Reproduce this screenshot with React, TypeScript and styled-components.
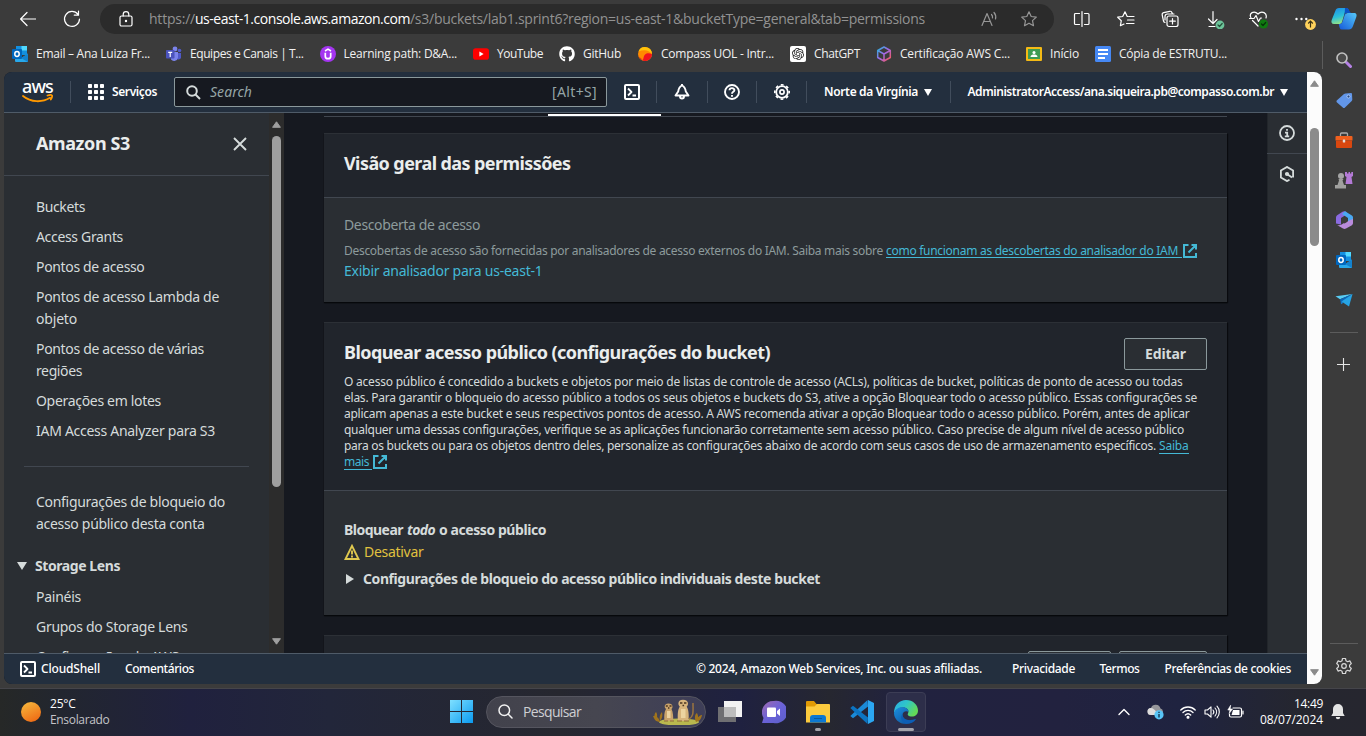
import React, { useLayoutEffect, useRef } from "react";
import styled, { createGlobalStyle, css } from "styled-components";
import { FaGithub } from "react-icons/fa";
import { SiOpenai } from "react-icons/si";

const ember = `"Noto Sans", "Open Sans", sans-serif`;
const segoe = `"Open Sans", "Noto Sans", sans-serif`;

const GlobalStyle = createGlobalStyle`
  * { box-sizing: border-box; }
  html, body { margin: 0; height: 736px; overflow: hidden; background: #3b3b3b; }
  body { font-family: ${ember}; font-size: 14px; line-height: 22px; color: #d5dbdb; }
  svg { display: block; flex: none; }
`;

/* ---------- text that keeps a given width by adjusting its tracking ---------- */

const FitBox = styled.span<{ $w: number }>`
  display: inline-block;
  flex: none;
  width: ${(p) => p.$w}px;
  white-space: pre;
  vertical-align: top;
`;

function Fit({ w, children, className }: { w: number; children: string; className?: string }) {
  const ref = useRef<HTMLSpanElement>(null);
  useLayoutEffect(() => {
    const el = ref.current;
    if (!el) return;
    el.style.letterSpacing = "0px";
    const natural = el.getBoundingClientRect().width;
    el.style.letterSpacing = `${(w - natural) / children.length}px`;
  }, [w, children]);
  return (
    <FitBox $w={w} className={className}>
      <span ref={ref}>{children}</span>
    </FitBox>
  );
}

/* ---------- layout shells ---------- */

const Screen = styled.div`
  display: flex;
  flex-direction: column;
  width: 1366px;
  height: 736px;
  overflow: hidden;
  background: #3b3b3b;
`;

const Toolbar = styled.div`
  display: flex;
  align-items: center;
  height: 38px;
  flex: none;
`;

const ToolIcon = styled.span<{ $ml?: number }>`
  display: block;
  flex: none;
  margin-left: ${(p) => p.$ml ?? 0}px;
`;

const AddressBar = styled.div`
  display: flex;
  align-items: center;
  width: 954px;
  height: 30px;
  margin-left: 19px;
  padding-left: 18px;
  border-radius: 15px;
  background: #2b2b2b;
  color: #8f8f8f;
  font: 14px/30px ${segoe};
`;

const UrlPart = styled(Fit)<{ $strong?: boolean }>`
  color: ${(p) => (p.$strong ? "#ffffff" : "#929292")};
`;

const Middle = styled.div`
  display: flex;
  height: 650px;
  flex: none;
`;

const BrowserColumn = styled.div`
  width: 1322px;
  flex: none;
`;

const Bookmarks = styled.div`
  display: flex;
  align-items: center;
  gap: 16px;
  height: 34px;
  padding: 0 0 2px 12px;
  color: #f1f1f1;
  font: 12px/18px ${segoe};
`;

const Bookmark = styled.div`
  display: flex;
  align-items: center;
  gap: 8px;
`;

const Page = styled.div`
  display: flex;
  width: 1318px;
  height: 612px;
  margin-left: 4px;
  border-radius: 8px;
  overflow: hidden;
  background: #161920;
`;

const Console = styled.div`
  display: flex;
  flex-direction: column;
  width: 1303px;
  flex: none;
`;

/* ---------- AWS header ---------- */

const AwsHeader = styled.header`
  display: flex;
  align-items: center;
  height: 41px;
  flex: none;
  padding-left: 18px;
  background: #232f3e;
  border-bottom: 1px solid #4f5b68;
  color: #ffffff;
  font-size: 12px;
  font-weight: 600;
`;

const LogoBox = styled.div`
  width: 31px;
  height: 24px;
  display: flex;
  flex-direction: column;
  font: 500 18px/12px ${ember};
  color: #ffffff;
`;

const Smile = styled.svg`
  margin-top: 2px;
`;

const Divider = styled.span<{ $ml: number; $mr: number }>`
  flex: none;
  width: 1px;
  height: 22px;
  margin: 0 ${(p) => p.$mr}px 0 ${(p) => p.$ml}px;
  background: #414d5c;
`;

const SearchField = styled.div`
  display: flex;
  align-items: center;
  width: 433px;
  height: 30px;
  margin: 0 17px;
  padding: 0 9px 0 11px;
  border: 1px solid #8b999c;
  border-radius: 2px;
  background: #161920;
  color: #95a5a6;
  font-size: 14px;
  font-weight: 400;
`;

const SearchHint = styled(Fit)`
  margin-left: 9px;
  font-style: italic;
`;

const Shortcut = styled(Fit)`
  margin-left: auto;
`;

const Spaced = styled.span<{ $ml: number }>`
  display: flex;
  align-items: center;
  flex: none;
  margin-left: ${(p) => p.$ml}px;
`;

/* ---------- console body ---------- */

const ConsoleBody = styled.div`
  display: flex;
  height: 540px;
  flex: none;
  overflow: hidden;
`;

const SideNav = styled.nav`
  width: 265px;
  height: 540px;
  flex: none;
  overflow: hidden;
  background: #2a2e33;
`;

const SideTitle = styled.div`
  display: flex;
  align-items: center;
  justify-content: space-between;
  height: 63px;
  padding: 0 22px 0 32px;
  border-bottom: 1px solid #414750;
  color: #eaeded;
  font-size: 18px;
  font-weight: 700;
  line-height: 22px;
`;

const SideTitleText = styled(Fit)`
  margin-bottom: 2px;
`;

const NavGroup = styled.div<{ $top: number }>`
  display: flex;
  flex-direction: column;
  gap: 8px;
  padding: ${(p) => p.$top}px 0 0 32px;
`;

const NavLink = styled.div`
  display: flex;
  flex-direction: column;
`;

const NavRule = styled.div`
  width: 225px;
  height: 1px;
  margin: 24px 0 0 20px;
  background: #414750;
`;

const NavHeading = styled.div`
  display: flex;
  align-items: center;
  gap: 8px;
  margin: 20px 0 1px;
  padding-left: 13px;
  font-weight: 700;
`;

const Scrollbar = styled.div<{ $light?: boolean }>`
  display: flex;
  flex-direction: column;
  align-items: center;
  width: 15px;
  flex: none;
  ${(p) =>
    p.$light
      ? css`
          padding: 8px 0 8px;
          background: #fcfcfc;
          color: #8b8b8b;
        `
      : css`
          padding: 8px 0 8px;
          background: #2c2c2c;
          color: #9f9f9f;
        `}
`;

const Thumb = styled.div<{ $h: number; $mt: number }>`
  width: 9px;
  height: ${(p) => p.$h}px;
  margin-top: ${(p) => p.$mt}px;
  border-radius: 5px;
  background: currentColor;
`;

const ArrowEnd = styled.div`
  margin-top: auto;
`;

const Main = styled.main`
  width: 983px;
  height: 540px;
  padding: 0 40px;
  overflow: hidden;
  background: #161920;
`;

const TabLine = styled.div`
  height: 4px;
  padding: 1px 0 0 224px;
  border-bottom: 1px solid #414750;
`;

const ActiveTab = styled.div`
  width: 113px;
  height: 2px;
  background: #ffffff;
`;

const Card = styled.section<{ $mt: number; $h: number }>`
  height: ${(p) => p.$h}px;
  margin-top: ${(p) => p.$mt}px;
  background: #2a2e33;
  box-shadow: 0 1px 1px #06080b, 1px 1px 1px #0a0c10;
`;

const CardHead = styled.div<{ $h: number }>`
  height: ${(p) => p.$h}px;
  padding: 0 20px;
  background: #21252c;
  border-top: 1px solid #2c3036;
  border-bottom: 1px solid #414750;
`;

const CardTitle = styled.h2<{ $pt: number }>`
  margin: 0;
  padding-top: ${(p) => p.$pt}px;
  color: #eaeded;
  font-size: 18px;
  font-weight: 700;
  line-height: 22px;
`;

const TitleRow = styled.div`
  display: flex;
  justify-content: space-between;
  padding-top: 15px;
`;

const EditButton = styled.button`
  width: 83px;
  height: 32px;
  padding: 0;
  border: 1px solid #8b999c;
  border-radius: 2px;
  background: #2a2e33;
  color: #d5dbdb;
  font: 700 14px/28px ${ember};
`;

const Description = styled.div`
  display: flex;
  flex-direction: column;
  padding-top: 4px;
  color: #d5dbdb;
  font-size: 12px;
  line-height: 16px;
`;

const TextLine = styled.div`
  display: flex;
  height: 16px;
`;

const CardBody = styled.div<{ $pt: number }>`
  padding: ${(p) => p.$pt}px 20px 0;
`;

const Muted = styled.div`
  color: #8d9b9c;
`;

const Caption = styled.div`
  display: flex;
  height: 22px;
  padding-top: 2px;
  margin-top: 2px;
  color: #8d9b9c;
  font-size: 12px;
  line-height: 22px;
`;

const LinkText = styled.div`
  color: #44b9d6;
`;

const Underlined = styled.span<{ $ml?: number; $w: number; $h?: number }>`
  display: block;
  flex: none;
  width: ${(p) => p.$w}px;
  height: ${(p) => p.$h ?? 16}px;
  margin-left: ${(p) => p.$ml ?? 0}px;
  border-bottom: 1px solid #44b9d6;
  color: #44b9d6;
`;

const LinkIcon = styled.span`
  display: block;
  flex: none;
  height: 14px;
  margin-top: 1px;
`;

const StrongRow = styled.div<{ $mt?: number }>`
  display: flex;
  align-items: center;
  gap: 4px;
  margin-top: ${(p) => p.$mt ?? 0}px;
  color: #d5dbdb;
  font-weight: 700;
`;

const Emphasis = styled(Fit)`
  font-style: italic;
`;

const Warning = styled.div`
  display: flex;
  align-items: center;
  gap: 4px;
  color: #e0c13f;
`;

const Expander = styled(StrongRow)`
  gap: 9px;
  padding-left: 2px;
`;

const GhostButtons = styled.div`
  display: flex;
  gap: 8px;
  justify-content: flex-end;
  padding-top: 15px;
`;

const GhostButton = styled.div<{ $w: number }>`
  width: ${(p) => p.$w}px;
  height: 32px;
  border: 1px solid #8b999c;
  border-radius: 2px;
  background: #2a2e33;
`;

const HelpRail = styled.aside`
  width: 40px;
  height: 540px;
  flex: none;
  box-shadow: inset 1px 0 0 #22262b;
  background: #2a2e33;
  color: #d5dbdb;
`;

const RailItem = styled.div<{ $line?: boolean }>`
  display: flex;
  align-items: center;
  justify-content: center;
  height: 41px;
  border-bottom: 1px solid ${(p) => (p.$line ? "#414750" : "transparent")};
`;

const Footer = styled.footer`
  display: flex;
  align-items: center;
  height: 31px;
  flex: none;
  padding-left: 16px;
  background: #232f3e;
  border-top: 1px solid #4f5b68;
  color: #ffffff;
  font-size: 12px;
  font-weight: 500;
`;

/* ---------- Edge side bar ---------- */

const EdgeBar = styled.div`
  display: flex;
  flex-direction: column;
  align-items: center;
  width: 44px;
  height: 650px;
  padding: 2px 0 2px;
`;

const EdgeItem = styled.div<{ $mr?: number }>`
  display: flex;
  align-items: center;
  justify-content: center;
  height: 40px;
  margin-right: ${(p) => p.$mr ?? 0}px;
`;

const EdgeRule = styled.div<{ $auto?: boolean }>`
  width: 28px;
  height: 1px;
  margin: ${(p) => (p.$auto ? "auto 0 2px" : "12px 0 11px")};
  background: #5c5c5c;
`;

const ChromeDivider = styled.div`
  width: 1px;
  height: 28px;
  margin: 2px -1px 0 auto;
  background: #5c5c5c;
`;

/* ---------- taskbar ---------- */

const Taskbar = styled.div`
  display: flex;
  align-items: center;
  height: 48px;
  flex: none;
  padding-bottom: 2px;
  border-top: 1px solid #45454a;
  background: linear-gradient(90deg, #262827 0, #22262f 60px, #20213e 190px, #22263a 330px, #26272f 560px, #1f2140 740px, #262730 830px, #21223f 900px, #22223f 1060px, #1f2340 1180px, #25262f 1300px, #26262f 1366px);
  color: #ffffff;
  font: 12px/16px ${segoe};
`;

const Weather = styled.div`
  display: flex;
  flex-direction: column;
  margin-left: 9px;
  width: 60px;
`;

const Faded = styled.div`
  color: #c4c4c8;
`;

const TaskSearch = styled.div`
  display: flex;
  align-items: center;
  width: 220px;
  height: 32px;
  margin-left: 13px;
  padding: 0 3px 0 11px;
  border: 1px solid #55555f;
  border-radius: 16px;
  background: linear-gradient(90deg, #42424c, #464650 50%, #3e3e58);
  color: #cfcfd3;
  font-size: 14px;
`;

const TaskIcon = styled.div<{ $active?: boolean; $mark?: "dot" | "bar" }>`
  display: flex;
  flex-direction: column;
  align-items: center;
  width: 40px;
  height: 40px;
  margin: 0 2px;
  padding-top: 7px;
  border: 1px solid ${(p) => (p.$active ? "#3c3d55" : "transparent")};
  border-radius: 4px;
  background: ${(p) => (p.$active ? "#2d2e49" : "transparent")};
  &::after {
    content: "";
    margin-top: 4px;
    width: ${(p) => (p.$mark === "bar" ? 16 : p.$mark === "dot" ? 6 : 0)}px;
    height: 3px;
    flex: none;
    border-radius: 2px;
    background: #a3a3ab;
  }
`;

const Clock = styled.div`
  display: flex;
  flex-direction: column;
  align-items: flex-end;
  width: 63px;
  margin-left: 16px;
`;

/* ---------- icons ---------- */

const line = { fill: "none", stroke: "currentColor", strokeLinecap: "round", strokeLinejoin: "round" } as const;

const Caret = ({ dir, w = 10, h = 8 }: { dir: "up" | "down" | "right"; w?: number; h?: number }) => (
  <svg width={w} height={h} viewBox="0 0 10 8" preserveAspectRatio="none" fill="currentColor">
    <path d={dir === "up" ? "M5 0L10 8H0z" : dir === "down" ? "M0 0h10L5 8z" : "M0 0l10 4-10 4z"} />
  </svg>
);

const ScrollArrow = ({ up }: { up?: boolean }) => (
  <svg width="9" height="7" viewBox="0 0 9 7" fill="currentColor" stroke="currentColor" strokeLinejoin="round">
    <path d={up ? "M4.500 .8L8.400 6.300H.6z" : "M4.500 6.200L.6.7h7.800z"} />
  </svg>
);

const External = () => (
  <svg width="15" height="14" viewBox="0 0 15 14" fill="none" stroke="#44b9d6" strokeWidth="2">
    <path d="M5.500 1H1v12h12V9M8.500 1H13v4.500M13 1L5.500 8.500" />
  </svg>
);

const ShellIcon = () => (
  <svg width="16" height="16" viewBox="0 0 16 16" fill="none" stroke="#fff" strokeWidth="2" strokeLinejoin="round">
    <rect x="1" y="1" width="14" height="14" rx="1" />
    <path d="M4 4.500L7.500 8 4 11.500M8.500 11.500H12" strokeWidth="1.800" />
  </svg>
);

const Outlook = ({ s = 16 }: { s?: number }) => (
  <svg width={s} height={s} viewBox="0 0 16 16">
    <path d="M4 0h11v9H4z" fill="#1490df" />
    <path d="M9.500 0H15v4.500H9.500z" fill="#50d9ff" />
    <path d="M4 4.500h5.500V9H4z" fill="#0364b8" />
    <path d="M3 8l6.500 4L16 7.500V15a1 1 0 0 1-1 1H4a1 1 0 0 1-1-1z" fill="#28a8ea" />
    <path d="M16 7.500V16L9 12z" fill="#1382ce" />
    <rect x="0" y="3" width="10" height="10" rx="1" fill="#0067be" />
    <ellipse cx="5" cy="8" rx="2.200" ry="2.400" fill="none" stroke="#fff" strokeWidth="1.500" />
  </svg>
);

const Meerkats = () => (
  <svg width="50" height="26" viewBox="0 0 50 26">
    <ellipse cx="26" cy="23" rx="20" ry="3.500" fill="#b9b84e" />
    <path d="M3 21c-3-4-1-7 0-8 2 3 1 6 0 8zM7 23c-5 0-6-4-7-6 4 0 6 2 7 6zM7 22c-1-4 0-7 2-9 1 4 0 7-2 9zM43 23c-2-4-1-8 1-9 2 4 1 7-1 9zM43 23c1-5 4-7 6-7-1 4-2 6-6 7z" fill="#a0741d" />
    <path d="M15.500 4.500c-2.600 0-4 1.600-3.800 3.300.1 1 .8 1.700 1.300 2.200-2 3-2 8-1.500 12h8.500c.5-4 0-9-1.500-12 .7-.6 1-1.400 1-2.300 0-2-1.600-3.200-4-3.200z" fill="#c9a36b" />
    <path d="M30 .8c-3 0-4.600 1.700-4.600 3.700 0 1.300.6 2.300 1.400 3C24.500 11 24.500 17 25 22h10.500c.6-5 .3-11-1.800-14.500.8-.7 1.300-1.700 1.300-3 0-2.200-2-3.700-5-3.700z" fill="#d7b47c" />
    <path d="M36 20c5-3 4-7 4-16" fill="none" stroke="#9b7440" strokeWidth="1.500" />
    <path d="M14 12h3.500v7H14zM28 10h4.500v9H28z" fill="#ecd3a0" />
    <path d="M12.800 7h2M16.500 7h2M27 4h2.400M31 4h2.400M15 9h1.400M29.500 6.500h1.600" stroke="#4b3420" strokeWidth="1.400" />
    <path d="M11 22h4M17 22h4M24 22h5M31 22h5" stroke="#8f6a37" strokeWidth="1" />
  </svg>
);

/* ---------- data ---------- */

const bookmarks: { label: string; w: number; icon: React.ReactNode }[] = [
  { label: "Email – Ana Luiza Fr...", w: 114, icon: <Outlook /> },
  {
    label: "Equipes e Canais | T...",
    w: 113.500,
    icon: (
      <svg width="16" height="16" viewBox="0 0 16 16">
        <circle cx="13.500" cy="4.500" r="1.800" fill="#5059c9" />
        <circle cx="9" cy="3" r="2.400" fill="#7b83eb" />
        <path d="M11 7h4v4.500a2.500 2.500 0 0 1-4 1.500z" fill="#5059c9" />
        <path d="M5 6h7v5.500a4 4 0 0 1-7 2z" fill="#7b83eb" />
        <rect x="0" y="4" width="8.500" height="8.500" rx=".8" fill="#4b53bc" />
        <path d="M2.200 6.300h4M4.200 6.300V11" stroke="#fff" strokeWidth="1.200" />
      </svg>
    ),
  },
  {
    label: "Learning path: D&A...",
    w: 113.500,
    icon: (
      <svg width="16" height="16" viewBox="0 0 16 16" fill="none" stroke="#fff">
        <circle cx="8" cy="8" r="8" fill="#a435f0" stroke="none" />
        <path d="M5.300 6.800v3.400a2.700 2.500 0 0 0 5.400 0V6.800" strokeWidth="1.700" />
        <path d="M5 5l3-1.800L11 5" strokeWidth="1.500" />
      </svg>
    ),
  },
  {
    label: "YouTube",
    w: 46,
    icon: (
      <svg width="16" height="16" viewBox="0 0 16 16">
        <rect x="0" y="2.300" width="16" height="11.400" rx="2.800" fill="#f00" />
        <path d="M6.400 5.500L10.600 8l-4.200 2.500z" fill="#fff" />
      </svg>
    ),
  },
  { label: "GitHub", w: 38, icon: <FaGithub size={16} color="#ffffff" /> },
  {
    label: "Compass UOL - Intr...",
    w: 113,
    icon: (
      <svg width="16" height="16" viewBox="0 0 16 16">
        <circle cx="8" cy="8" r="7" fill="#ff8a00" />
        <path d="M1.500 5.500A7 7 0 0 1 15 8c-3-4-8-5-13.500-2.500z" fill="#ffc20a" />
        <path d="M5.500 14.500C7 13 6 9 9.500 7.500c2-.7 4-.2 5.500.8a7 7 0 0 1-9.500 6.200z" fill="#f0141e" />
        <path d="M1.500 10.500c1.500 1 3.500 2 4.500 4a7 7 0 0 1-4.500-4z" fill="#e8321c" />
      </svg>
    ),
  },
  {
    label: "ChatGPT",
    w: 46,
    icon: (
      <svg width="16" height="16" viewBox="0 0 16 16">
        <rect width="16" height="16" rx="2" fill="#fff" />
        <SiOpenai x="2" y="2" size={12} color="#222222" />
      </svg>
    ),
  },
  {
    label: "Certificação AWS C...",
    w: 110,
    icon: (
      <svg width="16" height="16" viewBox="0 0 16 16" fill="none" strokeWidth="1.500" strokeLinejoin="round">
        <defs>
          <linearGradient id="cube" x1="0" y1="0" x2="1" y2="1">
            <stop offset="0" stopColor="#1fb6d9" />
            <stop offset=".5" stopColor="#a266e8" />
            <stop offset="1" stopColor="#ff5a4e" />
          </linearGradient>
        </defs>
        <path d="M8 1l6.300 3.500v7L8 15l-6.300-3.500v-7zM1.700 4.500L8 8l6.300-3.500M8 8v7" stroke="url(#cube)" />
      </svg>
    ),
  },
  {
    label: "Início",
    w: 29,
    icon: (
      <svg width="16" height="16" viewBox="0 0 16 16">
        <rect y="1" width="16" height="14" rx="1" fill="#f5ba15" />
        <rect x="2" y="3" width="12" height="10" fill="#3f9b52" />
        <circle cx="8" cy="6.500" r="1.500" fill="#fff" />
        <path d="M4.500 11c0-2 2-2.500 3.500-2.500s3.500.5 3.500 2.500z" fill="#fff" />
      </svg>
    ),
  },
  {
    label: "Cópia de ESTRUTU...",
    w: 108,
    icon: (
      <svg width="16" height="16" viewBox="0 0 16 16">
        <rect width="16" height="16" rx="1.500" fill="#4688f4" />
        <path d="M3 4h10M3 8h10M3 12h7" stroke="#fff" strokeWidth="2" />
      </svg>
    ),
  },
];

type NavLine = [string, number];
const navItems: NavLine[][] = [
  [["Buckets", 49]],
  [["Access Grants", 87]],
  [["Pontos de acesso", 108.5]],
  [["Pontos de acesso Lambda de", 183], ["objeto", 41]],
  [["Pontos de acesso de várias", 168], ["regiões", 46]],
  [["Operações em lotes", 125]],
  [["IAM Access Analyzer para S3", 179]],
];
const accountItems: NavLine[][] = [[["Configurações de bloqueio do", 189], ["acesso público desta conta", 168.5]]];
const lensItems: NavLine[][] = [[["Painéis", 45]], [["Grupos do Storage Lens", 151.5]], [["Configurações do AWS", 143]]];

const paragraph: NavLine[] = [
  ["O acesso público é concedido a buckets e objetos por meio de listas de controle de acesso (ACLs), políticas de bucket, políticas de ponto de acesso ou todas", 838.5],
  ["elas. Para garantir o bloqueio do acesso público a todos os seus objetos e buckets do S3, ative a opção Bloquear todo o acesso público. Essas configurações se", 853],
  ["aplicam apenas a este bucket e seus respectivos pontos de acesso. A AWS recomenda ativar a opção Bloquear todo o acesso público. Porém, antes de aplicar", 845.5],
  ["qualquer uma dessas configurações, verifique se as aplicações funcionarão corretamente sem acesso público. Caso precise de algum nível de acesso público", 840],
];

function NavList({ items, top }: { items: NavLine[][]; top: number }) {
  return (
    <NavGroup $top={top}>
      {items.map((lines) => (
        <NavLink key={lines[0][0]}>
          {lines.map(([text, w]) => (
            <Fit key={text} w={w}>{text}</Fit>
          ))}
        </NavLink>
      ))}
    </NavGroup>
  );
}

/* ---------- sections ---------- */

function BrowserToolbar() {
  return (
    <Toolbar>
      <ToolIcon $ml={20}>
        <svg width="16" height="16" viewBox="0 0 16 16" {...line} color="#fff" strokeWidth="1.200"><path d="M15.500 8H.8M7 1.500L.6 8 7 14.500" /></svg>
      </ToolIcon>
      <ToolIcon $ml={27}>
        <svg width="18" height="18" viewBox="0 0 18 18" {...line} color="#fff" strokeWidth="1.200"><path d="M16.500 9A7.500 7.500 0 1 1 15 4.400M15.500 1v4.200h-4.200" /></svg>
      </ToolIcon>
      <AddressBar>
        <svg width="16" height="16" viewBox="0 0 16 16" {...line} color="#fff" strokeWidth="1.200">
          <rect x="2" y="5" width="12" height="10" rx="1.500" /><path d="M5.200 5V3.400a2.800 2.800 0 0 1 5.600 0V5" /><circle cx="8" cy="10" r=".6" fill="#fff" />
        </svg>
        <Spaced $ml={15}>
          <UrlPart w={46}>https://</UrlPart>
          <UrlPart w={215} $strong>us-east-1.console.aws.amazon.com</UrlPart>
          <UrlPart w={515}>/s3/buckets/lab1.sprint6?region=us-east-1&bucketType=general&tab=permissions</UrlPart>
        </Spaced>
        <ToolIcon $ml={56}>
          <svg width="18" height="16" viewBox="0 0 18 16" {...line} color="#969696" strokeWidth="1.200"><path d="M1 14.500L6 2.500l5 12M2.800 10.500h6.400M10.500 3.500a4 4 0 0 1 1 3.500M13 1.500a7 7 0 0 1 1.500 6.500" /></svg>
        </ToolIcon>
        <ToolIcon $ml={21}>
          <svg width="18" height="18" viewBox="0 0 18 18" {...line} color="#969696" strokeWidth="1.200"><path d="M9 1.800l2.200 4.700 5.100.6-3.800 3.500 1 5.100L9 13.200l-4.500 2.500 1-5.100L1.700 7.100l5.100-.6z" /></svg>
        </ToolIcon>
      </AddressBar>
      <ToolIcon $ml={18.500}>
        <svg width="18" height="18" viewBox="0 0 18 18" {...line} color="#fff" strokeWidth="1.200"><path d="M6.500 3.500h-4a1 1 0 0 0-1 1v9a1 1 0 0 0 1 1h4M11.500 3.500h3.500a1 1 0 0 1 1 1v9a1 1 0 0 1-1 1h-3.500M9 1.500v15" /></svg>
      </ToolIcon>
      <ToolIcon $ml={26.500}>
        <svg width="18" height="18" viewBox="0 0 18 18" {...line} color="#fff" strokeWidth="1.200"><path d="M11 6.500h-.8L8 1.800 5.700 6.500l-5 .7 3.600 3.500-.9 5L7 14M12 6.500h5M10.500 10h6.500M9.500 13.500H17" /></svg>
      </ToolIcon>
      <ToolIcon $ml={26}>
        <svg width="18" height="18" viewBox="0 0 18 18" {...line} color="#fff" strokeWidth="1.200"><rect x="6" y="6" width="11" height="10.500" rx="2" /><path d="M11.500 8.500v5.500M8.700 11.200h5.600M4 12.500a2 2 0 0 1-1.500-1.500L1.200 5a2 2 0 0 1 1.500-2.300l6-1.400A2 2 0 0 1 11 2.800l.4 1M4 10V6.500a2.500 2.500 0 0 1 2.500-2.500H13" /></svg>
      </ToolIcon>
      <ToolIcon $ml={28}>
        <svg width="18" height="20" viewBox="0 0 18 20" {...line} color="#fff" strokeWidth="1.200">
          <path d="M6 2.500v12M1.500 10L6 14.500l4-4M2 17.500h6" /><circle cx="13" cy="16" r="4.400" fill="#6cc49a" stroke="none" /><path d="M11 16l1.500 1.500 2.700-3" stroke="#24513a" />
        </svg>
      </ToolIcon>
      <ToolIcon $ml={24}>
        <svg width="20" height="20" viewBox="0 0 20 20" {...line} color="#fff" strokeWidth="1.200">
          <path d="M2 9C-.5 4 5 1 9 5c4-4 9.500-1 8 4M.5 9.500h4.500l2-3 2.500 6 2-3.500h1M3.500 11.500L9 17" /><circle cx="14.500" cy="15" r="4.600" fill="#0f7a10" stroke="none" /><path d="M12.500 15l1.500 1.500 2.700-3" stroke="#06330a" />
        </svg>
      </ToolIcon>
      <ToolIcon $ml={26}>
        <svg width="22" height="22" viewBox="0 0 22 22" fill="#fff">
          <circle cx="1.500" cy="11" r="1.200" /><circle cx="6.500" cy="11" r="1.200" /><circle cx="11.300" cy="11" r="1.200" />
          <circle cx="15.500" cy="16.500" r="5.400" fill="#ffd25c" /><path d="M15.500 19.500v-6M13.200 15.500l2.300-2.300 2.300 2.300" fill="none" stroke="#3a3215" strokeWidth="1.200" />
        </svg>
      </ToolIcon>
      <ToolIcon $ml={14}>
        <svg width="26" height="24" viewBox="0 0 26 24">
          <defs>
            <linearGradient id="cpa" x1="0" y1="0" x2=".3" y2="1"><stop offset="0" stopColor="#1c8ae8" /><stop offset=".6" stopColor="#2cc0d8" /><stop offset="1" stopColor="#8fe08a" /></linearGradient>
            <linearGradient id="cpb" x1="1" y1="0" x2="0" y2="1"><stop offset="0" stopColor="#55c8f8" /><stop offset="1" stopColor="#1559d8" /></linearGradient>
          </defs>
          <path d="M8 1h7c2 0 2.500 1.500 3 3.500L14 5l-3 10c-.5 1.500-1.500 2-3 2H3c-2.500 0-3-2-2.300-4L4.500 3.500C5 2 6 1 8 1z" fill="url(#cpa)" />
          <path d="M14 1h2c2 0 2.500 4 4 5h-5l-1.500 3z" fill="#0b51c5" />
          <path d="M18 6h5c2.500 0 3 2 2.300 4l-3.500 9.500c-.8 2-2 3-4 3h-7c-2 0-2.500-2-3-5.500 2 0 3-.5 3.500-2l2.500-7C14.500 6.500 16 6 18 6z" fill="url(#cpb)" />
        </svg>
      </ToolIcon>
    </Toolbar>
  );
}

function Header() {
  return (
    <AwsHeader>
      <LogoBox>
        <Fit w={31}>aws</Fit>
        <Smile width="32" height="9" viewBox="0 0 32 9" fill="none" stroke="#ff9900" strokeWidth="1.800" strokeLinecap="round">
          <path d="M1 2c8 6.500 19 6.800 27 1.800M25.500 1.500c2-.6 4-.6 4.500 0 .3.800-.2 2.600-1.200 4" />
        </Smile>
      </LogoBox>
      <Divider $ml={17} $mr={17} />
      <svg width="16" height="16" viewBox="0 0 16 16" fill="#fff">
        {[0, 6, 12].map((y) => [0, 6, 12].map((x) => <rect key={`${x}-${y}`} x={x} y={y} width="4" height="4" rx=".8" />))}
      </svg>
      <Spaced $ml={8}><Fit w={45}>Serviços</Fit></Spaced>
      <SearchField>
        <svg width="15" height="15" viewBox="0 0 15 15" fill="none" stroke="#d5dbdb" strokeWidth="2"><circle cx="6" cy="6" r="4.800" /><path d="M9.500 9.500L14 14" /></svg>
        <SearchHint w={42}>Search</SearchHint>
        <Shortcut w={45}>[Alt+S]</Shortcut>
      </SearchField>
      <ShellIcon />
      <Divider $ml={16} $mr={17} />
      <svg width="16" height="16" viewBox="0 0 16 16" fill="none" stroke="#fff" strokeWidth="1.900" strokeLinejoin="round"><path d="M8 1.500c-2.800 1.200-3.500 3.500-3.800 6L1.500 11.500h13L11.800 7.500c-.3-2.500-1-4.800-3.800-6zM6 12.500a2 2 0 0 0 4 0" /><path d="M8 0v2" /></svg>
      <Divider $ml={17} $mr={16} />
      <svg width="16" height="16" viewBox="0 0 16 16" fill="none" stroke="#fff" strokeWidth="1.900"><circle cx="8" cy="8" r="7" /><path d="M5.500 6.300C5.600 3.300 10.500 3.500 10.400 6.200 10.300 7.800 8 7.700 8 9.700M8 11v1.700" /></svg>
      <Divider $ml={16} $mr={17} />
      <svg width="16" height="16" viewBox="0 0 16 16" fill="none" stroke="#fff">
        <circle cx="8" cy="8" r="5.800" strokeWidth="1.800" /><circle cx="8" cy="8" r="2.100" strokeWidth="1.700" />
        <circle cx="8" cy="8" r="7.200" strokeWidth="1.600" strokeDasharray="2.800 2.850" strokeDashoffset="1.400" />
      </svg>
      <Divider $ml={16} $mr={17} />
      <Fit w={94}>Norte da Virgínia</Fit>
      <Spaced $ml={6}><Caret dir="down" w={8} h={7} /></Spaced>
      <Divider $ml={18} $mr={16.500} />
      <Fit w={306.500}>AdministratorAccess/ana.siqueira.pb@compasso.com.br</Fit>
      <Spaced $ml={5.500}><Caret dir="down" w={8} h={7} /></Spaced>
    </AwsHeader>
  );
}

function Sidebar() {
  return (
    <>
      <SideNav>
        <SideTitle>
          <SideTitleText w={94}>Amazon S3</SideTitleText>
          <svg width="14" height="14" viewBox="0 0 14 14" stroke="#d5dbdb" strokeWidth="1.900"><path d="M1 1l12 12M13 1L1 13" /></svg>
        </SideTitle>
        <NavList items={navItems} top={20} />
        <NavRule />
        <NavList items={accountItems} top={24} />
        <NavHeading>
          <Caret dir="down" w={10} h={8} />
          <Fit w={85}>Storage Lens</Fit>
        </NavHeading>
        <NavList items={lensItems} top={8} />
      </SideNav>
      <Scrollbar>
        <ScrollArrow up />
        <Thumb $h={351} $mt={8} />
        <ArrowEnd><ScrollArrow /></ArrowEnd>
      </Scrollbar>
    </>
  );
}

function Content() {
  return (
    <Main>
      <TabLine><ActiveTab /></TabLine>
      <Card $mt={16} $h={169}>
        <CardHead $h={65}>
          <CardTitle $pt={18}><Fit w={226.500}>Visão geral das permissões</Fit></CardTitle>
        </CardHead>
        <CardBody $pt={16}>
          <Muted><Fit w={136}>Descoberta de acesso</Fit></Muted>
          <Caption>
            <Fit w={539}>Descobertas de acesso são fornecidas por analisadores de acesso externos do IAM. Saiba mais sobre</Fit>
            <Underlined $ml={3} $w={295.500} $h={18}>
              <Fit w={292}>como funcionam as descobertas do analisador do IAM</Fit>
            </Underlined>
            <Spaced $ml={1}><LinkIcon><External /></LinkIcon></Spaced>
          </Caption>
          <LinkText><Fit w={198.500}>Exibir analisador para us-east-1</Fit></LinkText>
        </CardBody>
      </Card>
      <Card $mt={20} $h={293}>
        <CardHead $h={169}>
          <TitleRow>
            <CardTitle $pt={3}><Fit w={426}>Bloquear acesso público (configurações do bucket)</Fit></CardTitle>
            <EditButton><Fit w={41}>Editar</Fit></EditButton>
          </TitleRow>
          <Description>
            {paragraph.map(([text, w]) => (
              <TextLine key={text}><Fit w={w}>{text}</Fit></TextLine>
            ))}
            <TextLine>
              <Fit w={812}>para os buckets ou para os objetos dentro deles, personalize as configurações abaixo de acordo com seus casos de uso de armazenamento específicos.</Fit>
              <Underlined $ml={3} $w={30}><Fit w={29.500}>Saiba</Fit></Underlined>
            </TextLine>
            <TextLine>
              <Underlined $w={28}><Fit w={25}>mais</Fit></Underlined>
              <Spaced $ml={1}><External /></Spaced>
            </TextLine>
          </Description>
        </CardHead>
        <CardBody $pt={28}>
          <StrongRow>
            <Fit w={59}>Bloquear</Fit>
            <Emphasis w={28}>todo</Emphasis>
            <Fit w={107}>o acesso público</Fit>
          </StrongRow>
          <Warning>
            <svg width="16" height="16" viewBox="0 0 16 16" fill="none" stroke="#e0c94f" strokeWidth="1.900"><path d="M8 1.900L1.500 15h13zM8 6.500v4M8 11.500v2" /></svg>
            <Fit w={59.500}>Desativar</Fit>
          </Warning>
          <Expander $mt={5}>
            <Caret dir="right" w={8} h={10} />
            <Fit w={457}>Configurações de bloqueio do acesso público individuais deste bucket</Fit>
          </Expander>
        </CardBody>
      </Card>
      <Card $mt={20} $h={120}>
        <CardHead $h={90}>
          <GhostButtons><GhostButton $w={83} /><GhostButton $w={88} /></GhostButtons>
        </CardHead>
      </Card>
    </Main>
  );
}

function TaskbarRow() {
  return (
    <Taskbar>
      <Spaced $ml={21}>
        <svg width="20" height="20" viewBox="0 0 20 20">
          <defs><linearGradient id="sun" x1=".2" y1="0" x2=".7" y2="1"><stop offset="0" stopColor="#f6b63c" /><stop offset="1" stopColor="#ee6a14" /></linearGradient></defs>
          <circle cx="10" cy="10" r="10" fill="url(#sun)" />
        </svg>
      </Spaced>
      <Weather>
        <Fit w={25.500}>25°C</Fit>
        <Faded><Fit w={59.500}>Ensolarado</Fit></Faded>
      </Weather>
      <Spaced $ml={340}>
        <svg width="23" height="23" viewBox="0 0 23 23">
          <defs><linearGradient id="win" x1="0" y1="0" x2="1" y2="1"><stop offset="0" stopColor="#7fe0ff" /><stop offset="1" stopColor="#0a9af0" /></linearGradient></defs>
          <path d="M0 0h11v11H0zM12 0h11v11H12zM0 12h11v11H0zM12 12h11v11H12z" fill="url(#win)" />
        </svg>
      </Spaced>
      <TaskSearch>
        <svg width="15" height="15" viewBox="0 0 15 15" {...line} color="#f2f2f2" strokeWidth="1.500"><circle cx="6.300" cy="6.300" r="5.300" /><path d="M10.300 10.300L14 14" /></svg>
        <Spaced $ml={10}><Fit w={58}>Pesquisar</Fit></Spaced>
        <Spaced $ml={72}><Meerkats /></Spaced>
      </TaskSearch>
      <Spaced $ml={2}>
        <TaskIcon>
          <svg width="24" height="24" viewBox="0 0 24 24"><path d="M6 1h18v16H6z" fill="#f2f2f2" /><path d="M0 7h18v15H0z" fill="#6f6f72" /><path d="M6 7h12v10H6z" fill="#bdbdbd" /></svg>
        </TaskIcon>
        <TaskIcon>
          <svg width="24" height="24" viewBox="0 0 24 24">
            <defs><linearGradient id="chat" x1="0" y1="0" x2="1" y2="1"><stop offset="0" stopColor="#a06ab0" /><stop offset=".5" stopColor="#6a62d8" /><stop offset="1" stopColor="#5b5fc9" /></linearGradient></defs>
            <path d="M11.500 1a11.300 11.300 0 1 1 0 22H0l1.500-5A11.300 11.300 0 0 1 11.500 1z" fill="url(#chat)" /><rect x="5" y="7.500" width="9" height="9.500" rx="1" fill="#fff" /><path d="M15 11l3-2.500v7.500l-3-2.500z" fill="#fff" />
          </svg>
        </TaskIcon>
        <TaskIcon $mark="dot">
          <svg width="24" height="24" viewBox="0 0 24 24"><path d="M0 2a1 1 0 0 1 1-1h7l2.500 3H20v5H0z" fill="#e09a05" /><path d="M0 6.500h8.500L11 4h12a1 1 0 0 1 1 1v17.500H0z" fill="#fccb3e" /><path d="M4 22.500V18a3 3 0 0 1 3-3h10a3 3 0 0 1 3 3v4.500z" fill="#0c78d2" /><path d="M8 18.500h8" stroke="#085a9e" /></svg>
        </TaskIcon>
        <TaskIcon>
          <svg width="24" height="24" viewBox="0 0 24 24"><path d="M18 6.500L3 18.200.3 16 17.500 0z" fill="#1b8ad8" /><path d="M18 17.500L3 5.800.3 8l17.200 16z" fill="#0c74c2" /><path d="M18 0v24l6-3V3z" fill="#2ba6f2" /></svg>
        </TaskIcon>
        <TaskIcon $active $mark="bar">
          <svg width="24" height="24" viewBox="0 0 24 24">
            <defs>
              <linearGradient id="eda" x1="0" y1="0" x2="1" y2=".5"><stop offset="0" stopColor="#2aa9e8" /><stop offset=".5" stopColor="#2fc6c8" /><stop offset="1" stopColor="#63da57" /></linearGradient>
              <linearGradient id="edb" x1="0" y1="0" x2="1" y2="1"><stop offset="0" stopColor="#1b8fe0" /><stop offset="1" stopColor="#0b4a92" /></linearGradient>
            </defs>
            <path d="M12 0c7 0 12 5 12 10.500 0 4-3 6-6 6-3.500 0-5-1.500-4-3C15.500 10 13 7.500 9 7.500c-4 0-7 2-9 5.500C0 5 5.500 0 12 0z" fill="url(#eda)" />
            <path d="M0 13C1 9 4.500 7.200 8.500 7.200c3.500 0 6 2 6 4.500-3-1.500-6 .3-6 3.300 0 4 5 6.800 13.500 4C20 22.200 16.500 24 12 24 5 24 0 19 0 13z" fill="url(#edb)" />
            <path d="M8.500 14c0 5 5 8 13.500 5-2 3.500-7 5-10 4.500C7 22 6 17 8.500 14z" fill="#0d5eb5" />
          </svg>
        </TaskIcon>
      </Spaced>
      <Spaced $ml={190}>
        <svg width="12" height="8" viewBox="0 0 12 8" {...line} color="#fff" strokeWidth="1.400"><path d="M1 6.500l5-5 5 5" /></svg>
      </Spaced>
      <Spaced $ml={17}>
        <svg width="17" height="16" viewBox="0 0 17 16"><path d="M4 11a3.500 3.500 0 0 1 0-7 5 5 0 0 1 9.500.5A3.500 3.500 0 0 1 14 11z" fill="#96979b" /><path d="M4 11a3.500 3.500 0 0 1 0-7c3 0 4 3.500 7 4l-1 3z" fill="#dddddd" /><circle cx="12" cy="10.800" r="4.600" fill="#58c5f7" /><path d="M12 10v3.500M12 7.800v1.200" stroke="#153b56" strokeWidth="1.400" /></svg>
      </Spaced>
      <Spaced $ml={16}>
        <svg width="16" height="14" viewBox="0 0 16 14" {...line} color="#fff" strokeWidth="1.300"><path d="M.8 5a10.200 10.200 0 0 1 14.400 0M3 7.500a7 7 0 0 1 10 0M5.300 10a3.900 3.900 0 0 1 5.400 0" /><circle cx="8" cy="12.300" r=".9" fill="#fff" /></svg>
      </Spaced>
      <Spaced $ml={8}>
        <svg width="16" height="14" viewBox="0 0 16 14" {...line} color="#fff" strokeWidth="1.100"><path d="M1 5h2.500L7 1.800v10.400L3.500 9H1zM9 5a3 3 0 0 1 0 4M11 3a6 6 0 0 1 0 8M13 1.200a8.500 8.500 0 0 1 0 11.600" /></svg>
      </Spaced>
      <Spaced $ml={7}>
        <svg width="17" height="14" viewBox="0 0 17 14" {...line} color="#fff" strokeWidth="1.200"><path d="M6 3h7a1.500 1.500 0 0 1 1.500 1.500v6A1.500 1.500 0 0 1 13 12H4a1.500 1.500 0 0 1-1.500-1.500V9M16 6v3" /><path d="M6 5h6.500v5H4.500z" fill="#fff" stroke="none" /><path d="M3.500.5L.8 5H3l-.8 3.500L5.500 4H3.300z" fill="#fff" strokeWidth=".6" /></svg>
      </Spaced>
      <Clock>
        <Fit w={29}>14:49</Fit>
        <Fit w={63}>08/07/2024</Fit>
      </Clock>
      <Spaced $ml={8}>
        <svg width="14" height="16" viewBox="0 0 14 16" fill="#e4e4e4"><path d="M7 0a5 5 0 0 1 5 5v4l1.700 3H.3L2 9V5a5 5 0 0 1 5-5zM4.800 13h4.400a2.200 2.200 0 0 1-4.400 0z" /></svg>
      </Spaced>
    </Taskbar>
  );
}

function EdgeSidebar() {
  return (
    <EdgeBar>
      <EdgeItem><svg width="16" height="16" viewBox="0 0 16 16"><path d="M10.500 10.500l4 4" stroke="#b682e6" strokeWidth="3" strokeLinecap="round" /><circle cx="6" cy="6" r="5" fill="#4b4b4b" stroke="#c2c2c2" strokeWidth="1.600" /></svg></EdgeItem>
      <EdgeItem><svg width="17" height="17" viewBox="0 0 17 17"><path d="M9.500 1.500L15 1a1 1 0 0 1 1 1l.3 5.500c0 .6-.2 1-.6 1.400L9 15.500c-.7.700-1.500.7-2.200 0L1 10.500c-.7-.7-.7-1.500 0-2.200L8 2c.4-.3.900-.5 1.500-.5z" fill="#6296e8" /><circle cx="12.500" cy="4.500" r="1.500" fill="#27487f" stroke="#bcd6ff" strokeWidth=".8" /></svg></EdgeItem>
      <EdgeItem><svg width="18" height="16" viewBox="0 0 18 16"><path d="M5.500 4V2a1 1 0 0 1 1-1h5a1 1 0 0 1 1 1v2" fill="none" stroke="#aaa" strokeWidth="1.300" /><path d="M1.500 4h15a1 1 0 0 1 1 1v3.500H.5V5a1 1 0 0 1 1-1z" fill="#f0601e" /><path d="M1 8.500h16V15a1 1 0 0 1-1 1H2a1 1 0 0 1-1-1z" fill="#d9470f" /><rect x="7.800" y="7.500" width="2.400" height="3" rx=".5" fill="#e6e0dc" /></svg></EdgeItem>
      <EdgeItem><svg width="18" height="18" viewBox="0 0 18 18"><path d="M10 1h2v1.500h1.500V1h1.500v1.500h1.300V1H18v4l-1.500 1 1 7h-7l1-7L10 5z" fill="#b47ad6" /><circle cx="6" cy="5" r="3" fill="#a5a5a5" /><path d="M3.500 8h5l-1 1.500L9 14h2v3.500H0V14h2.500l1.500-4.500z" fill="#a0a09e" /></svg></EdgeItem>
      <EdgeItem>
        <svg width="17" height="18" viewBox="0 0 17 18"><path d="M6.500.8L1.500 4C.5 4.700 0 5.500 0 6.500v6l5 1V7l5.500-3.500V1C9 0 7.800 0 6.500.8z" fill="#8a6ae0" /><path d="M9 .3l6.500 3.900c1 .6 1.500 1.400 1.500 2.500v4l-5-.7V7L6 3z" fill="#4aa8f2" /><path d="M17 8v4c0 1-.5 1.800-1.500 2.400L10 17.600c-1 .5-2 .5-3 0L1 14c3 1 5-.5 7-2l4-2z" fill="#b98bdc" /><path d="M8.500 6l3 1.700v3l-3 1.700-3-1.700v-3z" fill="#3b3b3b" /></svg>
      </EdgeItem>
      <EdgeItem><Outlook /></EdgeItem>
      <EdgeItem><svg width="18" height="14" viewBox="0 0 18 14"><path d="M17.500 1L.5 3.200l4.500 3z" fill="#58ccf4" /><path d="M17.500 1L5 6.200l1 5z" fill="#0b66b8" /><path d="M17.500 1L6.500 8.500l7.500 5z" fill="#27a4e4" /><path d="M6 11.200l.5-3 2 1.500z" fill="#1b83cc" /></svg></EdgeItem>
      <EdgeRule />
      <EdgeItem $mr={1}><svg width="13" height="13" viewBox="0 0 13 13" stroke="#e6e6e6" strokeWidth="1.100"><path d="M6.500 0v13M0 6.500h13" /></svg></EdgeItem>
      <EdgeRule $auto />
      <EdgeItem>
        <svg width="18" height="18" viewBox="0 0 18 18" {...line} color="#d8d8d8" strokeWidth="1.200"><path d="M7.500 1.500h3l.5 2.300 1.600.9 2.200-.8 1.500 2.600-1.700 1.600v1.800l1.700 1.600-1.500 2.600-2.200-.8-1.600.9-.5 2.300h-3L7 14.200l-1.600-.9-2.200.8-1.500-2.600 1.700-1.600V8.100L1.700 6.500l1.500-2.600 2.200.8L7 3.800z" /><circle cx="9" cy="9" r="2.300" /></svg>
      </EdgeItem>
    </EdgeBar>
  );
}

export default function App() {
  return (
    <>
      <GlobalStyle />
      <Screen>
        <BrowserToolbar />
        <Middle>
          <BrowserColumn>
            <Bookmarks>
              {bookmarks.map((b) => (
                <Bookmark key={b.label}>
                  {b.icon}
                  <Fit w={b.w}>{b.label}</Fit>
                </Bookmark>
              ))}
              <ChromeDivider />
            </Bookmarks>
            <Page>
              <Console>
                <Header />
                <ConsoleBody>
                  <Sidebar />
                  <Content />
                  <HelpRail>
                    <RailItem $line>
                      <svg width="16" height="16" viewBox="0 0 16 16" fill="none" stroke="currentColor" strokeWidth="1.800"><circle cx="8" cy="8" r="7" /><path d="M8 4v1.800M6 7.700h2.200V11M5.800 11.300h4.400" /></svg>
                    </RailItem>
                    <RailItem>
                      <svg width="16" height="16" viewBox="0 0 16 16" fill="none" stroke="currentColor" strokeWidth="1.800"><path d="M10.500 13.800L8 15.100 1.900 11.600V4.400L8 .9l6.100 3.500v7M8 8l5 3.500" /><circle cx="8" cy="8" r="1.200" fill="currentColor" /></svg>
                    </RailItem>
                  </HelpRail>
                </ConsoleBody>
                <Footer>
                  <ShellIcon />
                  <Spaced $ml={5}><Fit w={59}>CloudShell</Fit></Spaced>
                  <Spaced $ml={25}><Fit w={69}>Comentários</Fit></Spaced>
                  <Spaced $ml={502}><Fit w={286}>© 2024, Amazon Web Services, Inc. ou suas afiliadas.</Fit></Spaced>
                  <Spaced $ml={30}><Fit w={63}>Privacidade</Fit></Spaced>
                  <Spaced $ml={24.500}><Fit w={40}>Termos</Fit></Spaced>
                  <Spaced $ml={25}><Fit w={126.500}>Preferências de cookies</Fit></Spaced>
                </Footer>
              </Console>
              <Scrollbar $light>
                <ScrollArrow up />
                <Thumb $h={118} $mt={41} />
                <ArrowEnd><ScrollArrow /></ArrowEnd>
              </Scrollbar>
            </Page>
          </BrowserColumn>
          <EdgeSidebar />
        </Middle>
        <TaskbarRow />
      </Screen>
    </>
  );
}
